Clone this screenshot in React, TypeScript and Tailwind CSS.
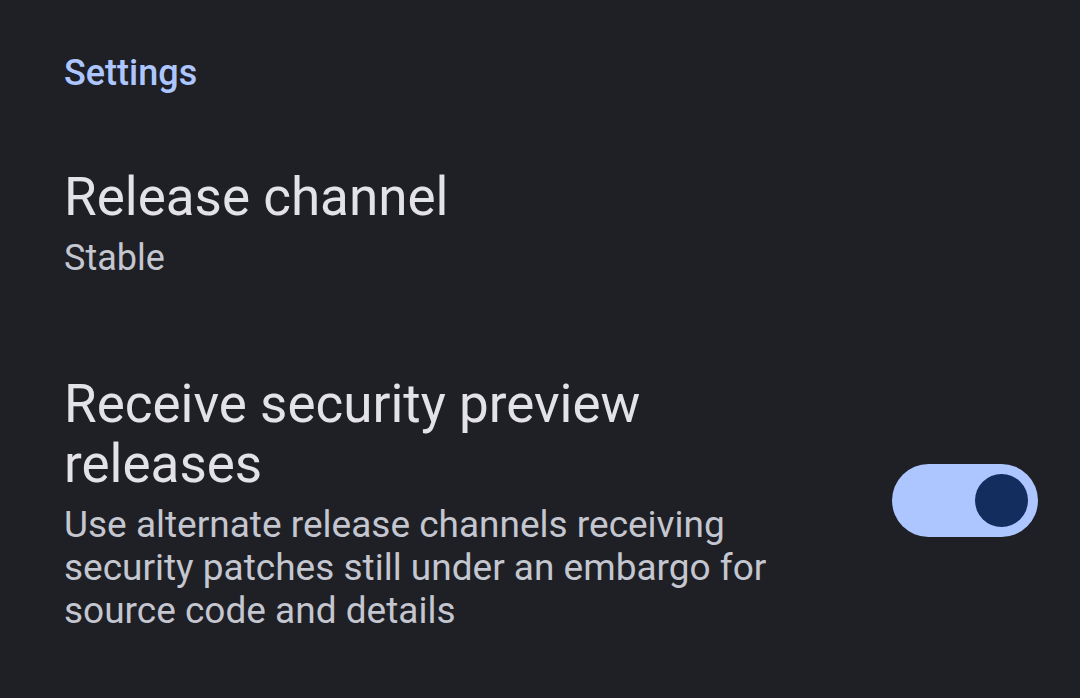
export default function App() {
  return (
    <div
      className="w-[1080px] h-[698px] overflow-hidden bg-[#1f2025] pl-16 pr-[42px]"
      style={{ fontFamily: 'Roboto, "Noto Sans", sans-serif' }}
    >
      <div className="pt-[51px] text-[36px] leading-[44px] font-medium text-[#adc6ff]">Settings</div>

      <div className="mt-[71px]">
        <div className="text-[53px] leading-[62px] text-[#e3e2e6]">Release channel</div>
        <div className="mt-2 text-[36px] leading-[44px] text-[#c4c6d0]">Stable</div>
      </div>

      <div className="mt-[94px] flex items-center justify-between">
        <div className="w-[720px]">
          <div className="text-[53px] leading-[60px] text-[#e3e2e6]">
            Receive security preview releases
          </div>
          <div className="mt-[9px] text-[37px] leading-[43px] text-[#c4c6d0]">
            Use alternate release channels receiving security patches still under an embargo for source code and details
          </div>
        </div>
        <button className="mb-[5px] w-[146px] h-[73px] rounded-full bg-[#adc6ff] flex items-center justify-end pr-[10px]">
          <span className="block w-[53px] h-[53px] rounded-full bg-[#122d5e]" />
        </button>
      </div>
    </div>
  );
}
